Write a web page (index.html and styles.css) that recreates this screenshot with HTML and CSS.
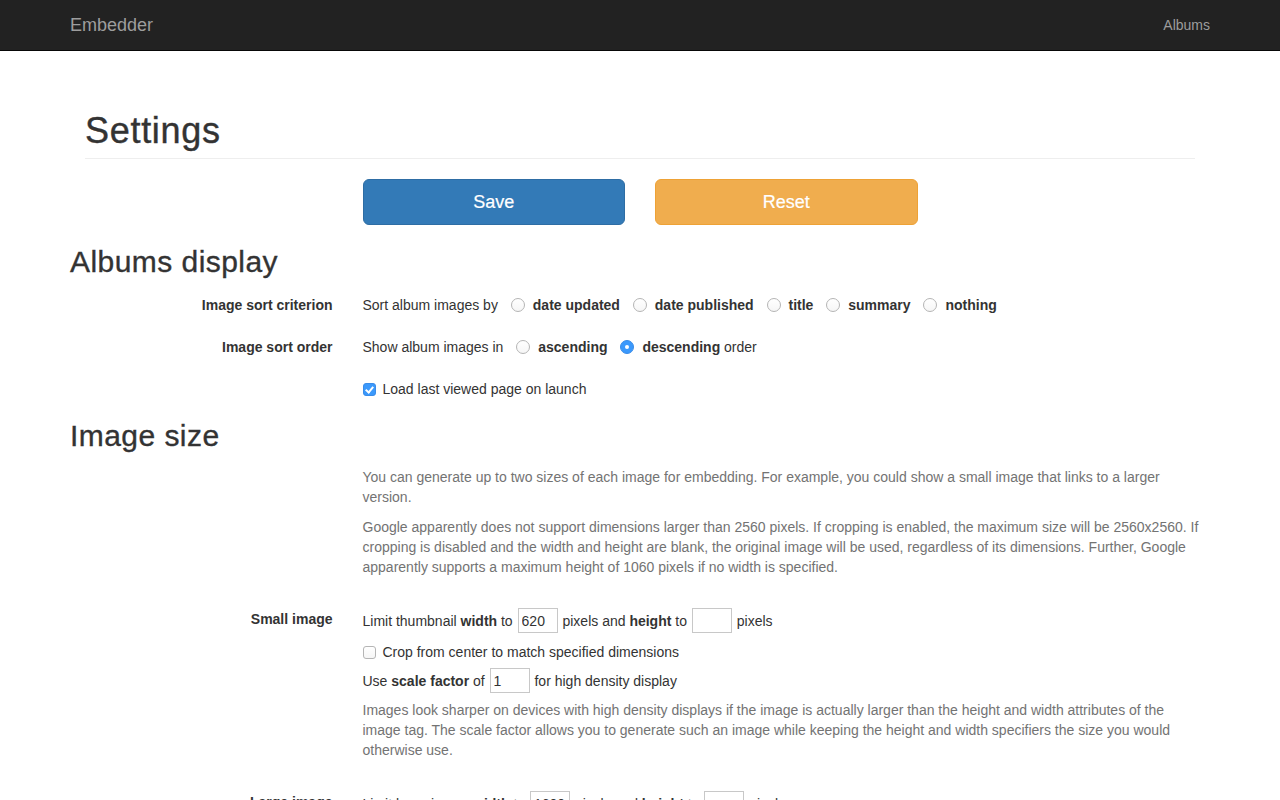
FILE: index.html
```html
<!DOCTYPE html>
<html lang="en">
<head>
<meta charset="utf-8">
<title>Embedder - Settings</title>
<link rel="stylesheet" href="styles.css">
</head>
<body>
<nav class="navbar">
  <div class="navbar-inner">
    <a class="brand" href="#">Embedder</a>
    <a class="nav-link" href="#">Albums</a>
  </div>
</nav>
<main class="container">
  <div class="page-header"><h1>Settings</h1></div>
  <div class="button-row">
    <div></div>
    <button class="btn btn-save" type="button">Save</button>
    <button class="btn btn-reset" type="button">Reset</button>
  </div>

  <h2>Albums display</h2>
  <div class="form-group">
    <label class="control-label">Image sort criterion</label>
    <div class="controls">
      Sort album images by
      <label class="radio-inline"><input type="radio" name="crit"><b>date updated</b></label>
      <label class="radio-inline"><input type="radio" name="crit"><b>date published</b></label>
      <label class="radio-inline"><input type="radio" name="crit"><b>title</b></label>
      <label class="radio-inline"><input type="radio" name="crit"><b>summary</b></label>
      <label class="radio-inline"><input type="radio" name="crit"><b>nothing</b></label>
    </div>
  </div>
  <div class="form-group">
    <label class="control-label">Image sort order</label>
    <div class="controls">
      Show album images in
      <label class="radio-inline"><input type="radio" name="order"><b>ascending</b></label>
      <label class="radio-inline"><input type="radio" name="order" checked><b>descending</b> order</label>
    </div>
  </div>
  <div class="form-group">
    <div></div>
    <div class="controls">
      <label class="check"><input type="checkbox" checked>Load last viewed page on launch</label>
    </div>
  </div>

  <h2>Image size</h2>
  <div class="form-group">
    <div></div>
    <div class="help-col">
      <p class="help">You can generate up to two sizes of each image for embedding. For example, you could show a small image that links to a larger version.</p>
      <p class="help">Google apparently does not support dimensions larger than 2560 pixels. If cropping is enabled, the maximum size will be 2560x2560. If cropping is disabled and the width and height are blank, the original image will be used, regardless of its dimensions. Further, Google apparently supports a maximum height of 1060 pixels if no width is specified.</p>
    </div>
  </div>

  <div class="form-group">
    <label class="control-label">Small image</label>
    <div class="controls">
      <div class="input-line">Limit thumbnail <b>width</b> to <input class="num" type="text" value="620"> pixels and <b>height</b> to <input class="num" type="text" value=""> pixels</div>
      <div class="check-line"><label class="check"><input type="checkbox">Crop from center to match specified dimensions</label></div>
      <div class="input-line second">Use <b>scale factor</b> of <input class="num" type="text" value="1"> for high density display</div>
      <p class="help tight">Images look sharper on devices with high density displays if the image is actually larger than the height and width attributes of the<br>image tag. The scale factor allows you to generate such an image while keeping the height and width specifiers the size you would<br>otherwise use.</p>
    </div>
  </div>

  <div class="form-group">
    <label class="control-label">Large image</label>
    <div class="controls">
      <div class="input-line">Limit large image <b>width</b> to <input class="num" type="text" value="1600"> pixels and <b>height</b> to <input class="num" type="text" value=""> pixels</div>
      <div class="check-line"><label class="check"><input type="checkbox">Crop from center to match specified dimensions</label></div>
    </div>
  </div>
</main>
</body>
</html>
```

FILE: styles.css
```css
* { box-sizing: border-box; }
html, body { margin: 0; padding: 0; }
body {
  font-family: "Liberation Sans", Arial, Helvetica, sans-serif;
  font-size: 14px;
  line-height: 20px;
  color: #333;
  background: #fff;
}
b { font-weight: 700; }

.navbar {
  background: #222;
  border-bottom: 1px solid #080808;
  height: 51px;
}
.navbar-inner {
  width: 1140px;
  margin: 0 auto;
  height: 50px;
  display: flex;
  align-items: center;
  justify-content: space-between;
}
.brand {
  color: #9d9d9d;
  font-size: 18px;
  line-height: 20px;
  text-decoration: none;
}
.nav-link {
  color: #9d9d9d;
  font-size: 14px;
  text-decoration: none;
}

.container {
  width: 1140px;
  margin: 0 auto;
}

.page-header {
  margin: 60px 15px 20px;
  padding-bottom: 7px;
  border-bottom: 1px solid #eee;
}
h1 {
  margin: 0;
  font-size: 36px;
  line-height: 39.6px;
  font-weight: 500;
  letter-spacing: 0.7px;
  -webkit-text-stroke: 0.4px #333;
}
h2 {
  margin: 20px 0 10px;
  font-size: 30px;
  line-height: 33px;
  font-weight: 500;
  letter-spacing: 0.45px;
  -webkit-text-stroke: 0.35px #333;
}

.button-row {
  display: grid;
  grid-template-columns: 262.5px 262.5px 262.5px;
  column-gap: 30px;
}
.btn {
  font-family: inherit;
  font-size: 18px;
  line-height: 24px;
  padding: 10px 16px;
  border-radius: 6px;
  border: 1px solid transparent;
  color: #fff;
  height: 46px;
  cursor: pointer;
  -webkit-text-stroke: 0.2px #fff;
}
.btn-save { background: #337ab7; border-color: #2e6da4; }
.btn-reset { background: #f0ad4e; border-color: #eea236; }

.form-group {
  display: grid;
  grid-template-columns: 262.5px 1fr;
  column-gap: 30px;
  margin-bottom: 15px;
}
.control-label {
  text-align: right;
  font-weight: 700;
  padding-top: 7px;
}
.controls {
  padding-top: 7px;
}
.radio-inline {
  white-space: nowrap;
}
.radio-inline input {
  -webkit-appearance: none;
  appearance: none;
  width: 14px;
  height: 14px;
  margin: 0 8px 0 9px;
  border: 1px solid #b5b5b5;
  border-radius: 50%;
  background: linear-gradient(#fff, #f6f6f6);
  vertical-align: -2px;
  position: relative;
}
.radio-inline input:checked {
  background: #3b99fc;
  border-color: #3a8ce8;
}
.radio-inline input:checked::after {
  content: "";
  position: absolute;
  left: 4px;
  top: 4px;
  width: 4px;
  height: 4px;
  border-radius: 50%;
  background: #fff;
}
.check input {
  -webkit-appearance: none;
  appearance: none;
  width: 13px;
  height: 13px;
  margin: 0 7px 0 0;
  border: 1px solid #b5b5b5;
  border-radius: 3px;
  background: linear-gradient(#fff, #f6f6f6);
  vertical-align: -2px;
  position: relative;
}
.check input:checked {
  background: #3b99fc;
  border-color: #3a8ce8;
}
.check input:checked::after {
  content: "";
  position: absolute;
  left: 3.5px;
  top: 1px;
  width: 3px;
  height: 6px;
  border: solid #fff;
  border-width: 0 2px 2px 0;
  transform: rotate(40deg);
}

.help-col { min-width: 0; }
.help {
  color: #737373;
  margin: 5px 0 10px;
}
.help.tight { margin-top: 6px; }

.input-line {
  height: 25px;
  line-height: 25px;
  white-space: nowrap;
}
.input-line.second { margin-top: 7px; }
.check-line { margin-top: 8px; }
.num {
  font-family: inherit;
  font-size: 14px;
  width: 40px;
  height: 25px;
  padding: 0 3px;
  margin: -2px 1px 0;
  border: 1px solid #c8c8c8;
  border-radius: 0;
  color: #333;
  vertical-align: middle;
}
```
